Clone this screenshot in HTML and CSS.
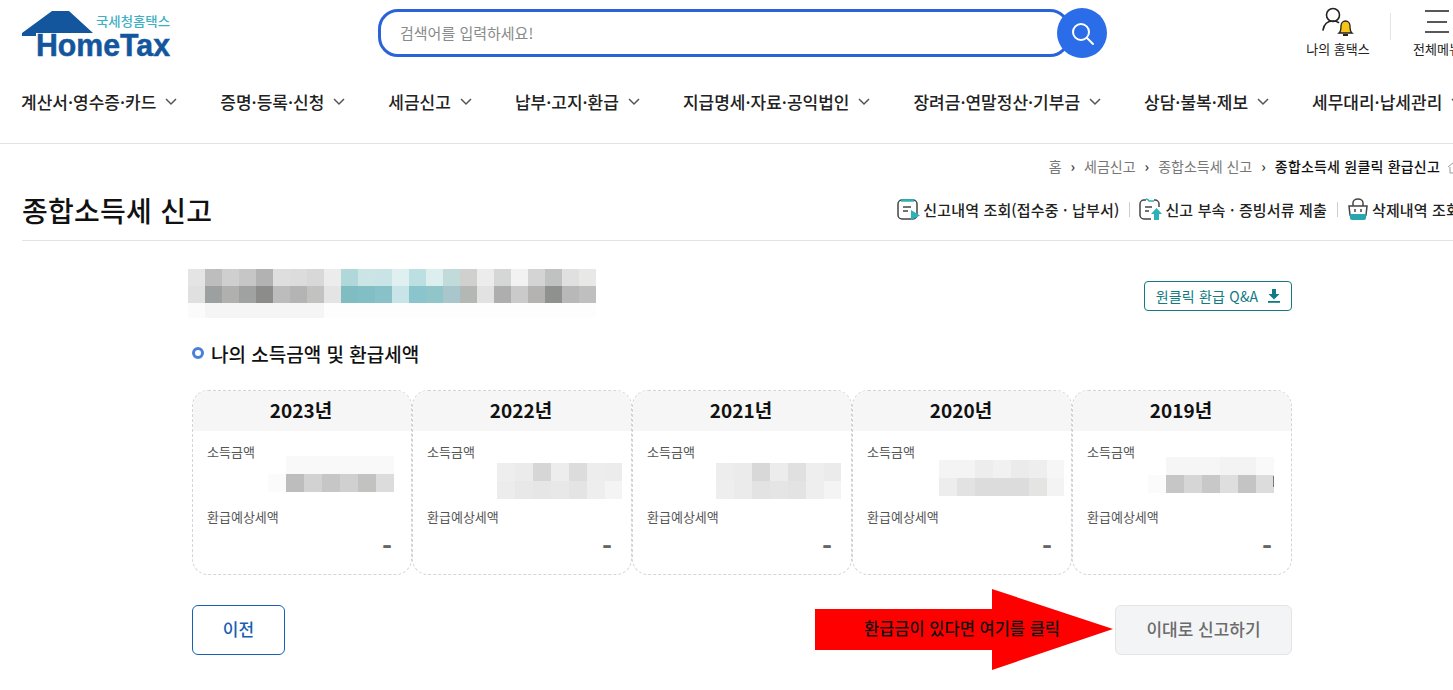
FILE: index.html
```html
<!DOCTYPE html>
<html lang="ko">
<head>
<meta charset="utf-8">
<title>종합소득세 신고</title>
<link rel="stylesheet" href="styles.css">
</head>
<body>
<div class="page">
  <header class="header">
    <div class="top">
      <svg class="logo" width="150" height="50" viewBox="0 0 150 50">
        <polygon class="logo-roof" points="0,26 30,4 47,4 71,26 68,26 40,26 14,26 14,29 0,29"/>
        <text class="logo-sub" x="74" y="19" textLength="74" lengthAdjust="spacingAndGlyphs">국세청홈택스</text>
        <text class="logo-main" x="14" y="49" textLength="134" lengthAdjust="spacingAndGlyphs">HomeTax</text>
      </svg>
      <div class="search">
        <div class="search-box">검색어를 입력하세요!</div>
        <div class="search-btn">
          <svg width="26" height="26" viewBox="0 0 26 26"><circle cx="12" cy="12" r="8" fill="none" stroke="#fff" stroke-width="2"/><path d="M18 18l6 6" stroke="#fff" stroke-width="2" stroke-linecap="round"/></svg>
        </div>
      </div>
      <div class="util">
        <svg class="util-icon" width="36" height="30" viewBox="0 0 36 30">
          <circle cx="13" cy="8" r="6.5" fill="none" stroke="#222" stroke-width="1.6"/>
          <path d="M3 23c1-6 5-9 10-9 2 0 4 .5 5.5 1.5" fill="none" stroke="#222" stroke-width="1.6" stroke-linecap="round"/>
          <path d="M19 26c2-1.500 2-4 2-7 0-3 2-5 4.500-5s4.500 2 4.500 5c0 3 0 5.500 2 7z" fill="#f5c518" stroke="#222" stroke-width="1.300"/>
          <rect x="23" y="27" width="5" height="2" fill="#222"/>
        </svg>
        <span class="util-label">나의 홈택스</span>
      </div>
      <div class="util-sep"></div>
      <div class="util util-menu">
        <svg class="util-icon" width="26" height="30" viewBox="0 0 26 30">
          <path d="M1 4h24M3 15h20M1 25h24" stroke="#222" stroke-width="1.500"/>
        </svg>
        <span class="util-label">전체메뉴</span>
      </div>
    </div>
    <nav class="nav">
      <a class="nav-item">계산서·영수증·카드<svg class="chev" width="12" height="8" viewBox="0 0 12 8"><path d="M1 1l5 5 5-5"/></svg></a>
      <a class="nav-item">증명·등록·신청<svg class="chev" width="12" height="8" viewBox="0 0 12 8"><path d="M1 1l5 5 5-5"/></svg></a>
      <a class="nav-item">세금신고<svg class="chev" width="12" height="8" viewBox="0 0 12 8"><path d="M1 1l5 5 5-5"/></svg></a>
      <a class="nav-item">납부·고지·환급<svg class="chev" width="12" height="8" viewBox="0 0 12 8"><path d="M1 1l5 5 5-5"/></svg></a>
      <a class="nav-item">지급명세·자료·공익법인<svg class="chev" width="12" height="8" viewBox="0 0 12 8"><path d="M1 1l5 5 5-5"/></svg></a>
      <a class="nav-item">장려금·연말정산·기부금<svg class="chev" width="12" height="8" viewBox="0 0 12 8"><path d="M1 1l5 5 5-5"/></svg></a>
      <a class="nav-item">상담·불복·제보<svg class="chev" width="12" height="8" viewBox="0 0 12 8"><path d="M1 1l5 5 5-5"/></svg></a>
      <a class="nav-item">세무대리·납세관리<svg class="chev" width="12" height="8" viewBox="0 0 12 8"><path d="M1 1l5 5 5-5"/></svg></a>
    </nav>
  </header>

  <div class="crumbs">
    <span>홈</span><i>›</i><span>세금신고</span><i>›</i><span>종합소득세 신고</span><i>›</i><b>종합소득세 원클릭 환급신고</b>
    <svg class="crumb-icon" width="14" height="14" viewBox="0 0 14 14"><path d="M1 7l6-5 6 5M3 7v6h8V7" fill="none" stroke="#999" stroke-width="1"/></svg>
  </div>

  <div class="title-row">
    <h1 class="title">종합소득세 신고</h1>
    <div class="links">
      <a class="link">
        <svg width="23" height="23" viewBox="0 0 23 23"><rect x="1" y="2" width="19" height="19" rx="4" fill="none" stroke="#444" stroke-width="1.500"/><path d="M4 2.500h13" stroke="#2bb3b8" stroke-width="2.500"/><path d="M6 9h8M6 13h5" stroke="#444" stroke-width="1.500"/><polygon points="14,12 23,17.500 14,22" fill="#2bb3b8"/></svg>
        신고내역 조회(접수중 · 납부서)
      </a>
      <span class="link-sep"></span>
      <a class="link">
        <svg width="23" height="23" viewBox="0 0 23 23"><path d="M7 2H5a4 4 0 0 0-4 4v11a4 4 0 0 0 4 4h7M15 2h1a4 4 0 0 1 4 4v3" fill="none" stroke="#444" stroke-width="1.500"/><path d="M7 1a3 3 0 0 1 3 2h5" fill="none" stroke="#2bb3b8" stroke-width="1.500"/><path d="M6 9h7M6 13h4" stroke="#444" stroke-width="1.500"/><polygon points="17.500,10 23,16 20,16 20,22 15,22 15,16 12,16" fill="#2bb3b8"/></svg>
        신고 부속 · 증빙서류 제출
      </a>
      <span class="link-sep"></span>
      <a class="link">
        <svg width="22" height="23" viewBox="0 0 22 23"><path d="M6 8V5a5 4 0 0 1 10 0v3" fill="none" stroke="#444" stroke-width="1.500"/><path d="M2 8h18l-1 9H3z" fill="#fff" stroke="#444" stroke-width="1.500"/><path d="M2.500 16h17l-.5 4a2 2 0 0 1-2 2H5a2 2 0 0 1-2-2z" fill="#2aa5ad"/><path d="M8 11v3M14 11v3" stroke="#444" stroke-width="1.500"/></svg>
        삭제내역 조회
      </a>
    </div>
  </div>

  <main class="main">
    <div class="intro">
      <svg class="mosaic" width="410" height="49" viewBox="0 0 410 49" shape-rendering="crispEdges">
        <g>
          <rect x="0" width="17" height="17" fill="#e4e4e4"/><rect x="17" width="17" height="17" fill="#bdbdbd"/><rect x="34" width="17" height="17" fill="#cfcfcf"/><rect x="51" width="17" height="17" fill="#c6c6c6"/><rect x="68" width="17" height="17" fill="#b2b2b2"/><rect x="85" width="17" height="17" fill="#dedede"/><rect x="102" width="17" height="17" fill="#dcdcdc"/><rect x="119" width="17" height="17" fill="#d8d8d8"/><rect x="136" width="17" height="17" fill="#ececec"/><rect x="153" width="17" height="17" fill="#b0d8da"/><rect x="170" width="17" height="17" fill="#cbe5e6"/><rect x="187" width="17" height="17" fill="#c8e4e6"/><rect x="204" width="17" height="17" fill="#e0f0f0"/><rect x="221" width="17" height="17" fill="#bcdfe2"/><rect x="238" width="17" height="17" fill="#ddeeee"/><rect x="255" width="17" height="17" fill="#c0dbd9"/><rect x="272" width="17" height="17" fill="#d0d0ce"/><rect x="289" width="17" height="17" fill="#ececec"/><rect x="306" width="17" height="17" fill="#d5d6d6"/><rect x="323" width="17" height="17" fill="#f2f2f2"/><rect x="340" width="17" height="17" fill="#d4d4d4"/><rect x="357" width="17" height="17" fill="#c0c2c2"/><rect x="374" width="17" height="17" fill="#e0e0e0"/><rect x="391" width="17" height="17" fill="#e8e8e6"/>
        </g>
        <g transform="translate(0 17)">
          <rect x="0" width="17" height="17" fill="#e0e0e0"/><rect x="17" width="17" height="17" fill="#9da0a0"/><rect x="34" width="17" height="17" fill="#b0b0ae"/><rect x="51" width="17" height="17" fill="#a0a2a2"/><rect x="68" width="17" height="17" fill="#8c8c8a"/><rect x="85" width="17" height="17" fill="#bcbcbc"/><rect x="102" width="17" height="17" fill="#b4b4b4"/><rect x="119" width="17" height="17" fill="#c2c2c0"/><rect x="136" width="17" height="17" fill="#e4e4e4"/><rect x="153" width="17" height="17" fill="#7fbdc2"/><rect x="170" width="17" height="17" fill="#82bfc4"/><rect x="187" width="17" height="17" fill="#88c2c8"/><rect x="204" width="17" height="17" fill="#c9e4e8"/><rect x="221" width="17" height="17" fill="#8ac4cc"/><rect x="238" width="17" height="17" fill="#90c6ca"/><rect x="255" width="17" height="17" fill="#a8c6cc"/><rect x="272" width="17" height="17" fill="#b4b8b4"/><rect x="289" width="17" height="17" fill="#e2e2e2"/><rect x="306" width="17" height="17" fill="#aeaeae"/><rect x="323" width="17" height="17" fill="#cacaca"/><rect x="340" width="17" height="17" fill="#b4b3b1"/><rect x="357" width="17" height="17" fill="#8f918e"/><rect x="374" width="17" height="17" fill="#b8b8b8"/><rect x="391" width="17" height="17" fill="#bfbfbf"/>
        </g>
        <g transform="translate(0 34)">
          <rect x="0" width="17" height="15" fill="#fbfbfb"/><rect x="17" width="119" height="15" fill="#f5f5f5"/><rect x="136" width="272" height="15" fill="#fdfdfd"/>
        </g>
      </svg>
      <a class="qa">원클릭 환급 Q&amp;A
        <svg width="12" height="14" viewBox="0 0 12 14"><path d="M4 0h4v5h3.500L6 10.500.500 5H4z" fill="#127a82"/><rect x="0" y="12" width="12" height="1.800" fill="#127a82"/></svg>
      </a>
    </div>

    <h2 class="sec-title"><span class="ring"></span>나의 소득금액 및 환급세액</h2>

    <div class="cards">
      <section class="card">
        <div class="card-head">2023년</div>
        <div class="card-body">
          <div class="label">소득금액</div>
          <svg class="amount" width="218" height="48" viewBox="0 0 218 48" shape-rendering="crispEdges">
            <rect x="93" y="1" width="108" height="18" fill="#f9f9f9"/><rect x="75" y="19" width="18" height="18" fill="#fbfbfb"/>
            <rect x="93" y="19" width="18" height="18" fill="#bdbdbd"/><rect x="111" y="19" width="18" height="18" fill="#d2d2d2"/><rect x="129" y="19" width="18" height="18" fill="#c6c6c6"/><rect x="147" y="19" width="18" height="18" fill="#d0d0d0"/><rect x="165" y="19" width="18" height="18" fill="#c2c2c0"/><rect x="183" y="19" width="18" height="18" fill="#dcdcdc"/>
          </svg>
          <div class="label label-refund">환급예상세액</div>
          <div class="dash">-</div>
        </div>
      </section>
      <section class="card">
        <div class="card-head">2022년</div>
        <div class="card-body">
          <div class="label">소득금액</div>
          <svg class="amount" width="218" height="48" viewBox="0 0 218 48" shape-rendering="crispEdges">
            <rect x="84" y="8" width="18" height="18" fill="#eeeeee"/><rect x="102" y="8" width="18" height="18" fill="#ebebeb"/><rect x="120" y="8" width="18" height="18" fill="#d6d6d6"/><rect x="138" y="8" width="18" height="18" fill="#ededed"/><rect x="156" y="8" width="18" height="18" fill="#dcdcdc"/><rect x="174" y="8" width="18" height="18" fill="#ededed"/><rect x="192" y="8" width="17" height="18" fill="#ececec"/>
            <rect x="84" y="26" width="18" height="18" fill="#ececec"/><rect x="102" y="26" width="18" height="18" fill="#e8e8e8"/><rect x="120" y="26" width="18" height="18" fill="#e6e6e6"/><rect x="138" y="26" width="18" height="18" fill="#e8e8e8"/><rect x="156" y="26" width="18" height="18" fill="#e4e4e4"/><rect x="174" y="26" width="18" height="18" fill="#eeeeee"/><rect x="192" y="26" width="17" height="18" fill="#f4f4f4"/>
          </svg>
          <div class="label label-refund">환급예상세액</div>
          <div class="dash">-</div>
        </div>
      </section>
      <section class="card">
        <div class="card-head">2021년</div>
        <div class="card-body">
          <div class="label">소득금액</div>
          <svg class="amount" width="218" height="48" viewBox="0 0 218 48" shape-rendering="crispEdges">
            <rect x="83" y="8" width="18" height="18" fill="#ededed"/><rect x="101" y="8" width="18" height="18" fill="#ebebeb"/><rect x="119" y="8" width="18" height="18" fill="#d8d8d8"/><rect x="137" y="8" width="18" height="18" fill="#ececec"/><rect x="155" y="8" width="18" height="18" fill="#e0e0e0"/><rect x="173" y="8" width="18" height="18" fill="#eeeeee"/><rect x="191" y="8" width="17" height="18" fill="#ebebeb"/>
            <rect x="83" y="26" width="18" height="18" fill="#eeeeee"/><rect x="101" y="26" width="18" height="18" fill="#ebebeb"/><rect x="119" y="26" width="18" height="18" fill="#e3e3e3"/><rect x="137" y="26" width="18" height="18" fill="#e5e5e5"/><rect x="155" y="26" width="18" height="18" fill="#e3e3e3"/><rect x="173" y="26" width="18" height="18" fill="#eeeeee"/><rect x="191" y="26" width="17" height="18" fill="#f4f4f4"/>
          </svg>
          <div class="label label-refund">환급예상세액</div>
          <div class="dash">-</div>
        </div>
      </section>
      <section class="card">
        <div class="card-head">2020년</div>
        <div class="card-body">
          <div class="label">소득금액</div>
          <svg class="amount" width="218" height="48" viewBox="0 0 218 48" shape-rendering="crispEdges">
            <rect x="86" y="5" width="18" height="18" fill="#f4f4f4"/><rect x="104" y="5" width="18" height="18" fill="#f4f4f4"/><rect x="122" y="5" width="18" height="18" fill="#ededed"/><rect x="140" y="5" width="18" height="18" fill="#f1f1f1"/><rect x="158" y="5" width="18" height="18" fill="#ebebeb"/><rect x="176" y="5" width="18" height="18" fill="#eeeeee"/><rect x="194" y="5" width="17" height="18" fill="#f6f6f6"/>
            <rect x="86" y="23" width="18" height="18" fill="#ededed"/><rect x="104" y="23" width="18" height="18" fill="#e2e2e2"/><rect x="122" y="23" width="18" height="18" fill="#dcdcdc"/><rect x="140" y="23" width="18" height="18" fill="#dcdcdc"/><rect x="158" y="23" width="18" height="18" fill="#dcdcdc"/><rect x="176" y="23" width="18" height="18" fill="#e4e4e2"/><rect x="194" y="23" width="17" height="18" fill="#f3f3f3"/>
          </svg>
          <div class="label label-refund">환급예상세액</div>
          <div class="dash">-</div>
        </div>
      </section>
      <section class="card">
        <div class="card-head">2019년</div>
        <div class="card-body">
          <div class="label">소득금액</div>
          <svg class="amount" width="218" height="48" viewBox="0 0 218 48" shape-rendering="crispEdges">
            <rect x="93" y="2" width="54" height="18" fill="#f6f6f6"/><rect x="147" y="2" width="36" height="18" fill="#f3f3f3"/><rect x="183" y="2" width="18" height="18" fill="#f9f9f9"/><rect x="75" y="20" width="18" height="18" fill="#fbfbfb"/>
            <rect x="93" y="20" width="18" height="18" fill="#c6c6c6"/><rect x="111" y="20" width="18" height="18" fill="#d6d6d6"/><rect x="129" y="20" width="18" height="18" fill="#c8c8c8"/><rect x="147" y="20" width="18" height="18" fill="#dedede"/><rect x="165" y="20" width="18" height="18" fill="#c4c4c4"/><rect x="183" y="20" width="18" height="18" fill="#dcdcdc"/>
            <rect x="200" y="21" width="1" height="11" fill="#777"/>
          </svg>
          <div class="label label-refund">환급예상세액</div>
          <div class="dash">-</div>
        </div>
      </section>
    </div>

    <div class="actions">
      <button class="btn btn-prev">이전</button>
      <button class="btn btn-next">이대로 신고하기</button>
      <div class="callout">
        <svg width="300" height="82" viewBox="0 0 300 82"><polygon points="0,20 177,20 177,0 298,40 177,81 177,61 0,61" fill="#ff0000"/></svg>
        <span class="callout-text">환급금이 있다면 여기를 클릭</span>
      </div>
    </div>
  </main>
</div>
</body>
</html>
```
FILE: styles.css
```css
* { box-sizing: border-box; }
html, body { margin: 0; padding: 0; overflow: hidden; background: #fff; }
body { font-family: "Noto Sans CJK KR", "Noto Sans", sans-serif; color: #111; }
.page { width: 1484px; height: 690px; overflow: hidden; }

.header { height: 144px; border-bottom: 1px solid #e3e3e3; }
.top { display: flex; height: 70px; padding-left: 22px; align-items: flex-start; }
.logo { margin-top: 7px; flex: none; }
.logo-roof { fill: #14569e; }
.logo-sub { font-size: 13px; font-weight: 500; fill: #3eb0c6; font-family: "Noto Sans CJK KR", sans-serif; }
.logo-main { font-size: 31px; font-weight: 700; fill: #14569e; stroke: #14569e; stroke-width: 0.5px; font-family: "Liberation Sans", sans-serif; }

.search { position: relative; width: 729px; height: 50px; margin: 8px 0 0 206px; flex: none; }
.search-box { width: 692px; height: 48px; margin-top: 1px; border: 3px solid #2a62d9; border-radius: 20px; padding-left: 19px; font-size: 15px; line-height: 41px; color: #8a8a8a; }
.search-btn { position: absolute; right: 0; top: 0; width: 50px; height: 50px; border-radius: 50%; background: #2b6de8; display: flex; align-items: center; justify-content: center; }

.util { width: 80px; margin-left: 191px; display: flex; flex-direction: column; align-items: center; flex: none; padding-top: 7px; }
.util-icon { display: block; }
.util-label { font-size: 13px; line-height: 18px; margin-top: 3px; color: #222; white-space: nowrap; }
.util-sep { width: 1px; height: 27px; margin: 13px 0 0 12px; background: #e3e3e3; flex: none; }
.util-menu { margin-left: 16px; width: 60px; }

.nav { display: flex; padding-left: 21px; height: 60px; align-items: center; gap: 43px; margin-top: 1px; white-space: nowrap; }
.nav-item { display: flex; align-items: center; font-size: 17px; font-weight: 500; color: #222; flex: none; }
.chev { margin-left: 9px; margin-top: 1px; }
.chev path { fill: none; stroke: #555; stroke-width: 1.500; }

.crumbs { display: flex; justify-content: flex-end; align-items: center; height: 18px; margin-top: 13px; padding-right: 23px; font-size: 14px; color: #777; gap: 9px; }
.crumbs i { font-style: normal; color: #444; font-weight: 700; }
.crumbs b { color: #111; font-weight: 500; letter-spacing: 0.2px; }
.crumb-icon { flex: none; margin-top: 1px; margin-left: -2px; }

.title-row { display: flex; justify-content: space-between; align-items: center; height: 66px; margin: 0 0 0 22px; padding: 5px 24px 0 0; border-bottom: 1px solid #e3e3e3; }
.title { margin: 0; font-size: 28px; font-weight: 500; line-height: 40px; color: #111; letter-spacing: 0.25px; }
.links { display: flex; align-items: center; padding-bottom: 2px; }
.link { display: flex; align-items: center; gap: 3px; font-size: 15px; font-weight: 500; letter-spacing: 0.15px; color: #222; white-space: nowrap; }
.link-sep { width: 1px; height: 15px; background: #ccc; margin: 0 9px 0 10px; }

.main { width: 1100px; margin: 0 auto; }
.intro { display: flex; justify-content: space-between; align-items: flex-start; height: 90px; padding-top: 28px; }
.mosaic { margin-left: -4px; flex: none; }
.qa { display: flex; align-items: center; justify-content: center; gap: 10px; width: 148px; height: 30px; margin-top: 12px; padding-bottom: 1px; border: 1px solid #127a82; border-radius: 4px; font-size: 14px; letter-spacing: 0.2px; color: #127a82; }

.sec-title { display: flex; align-items: center; margin: 0; height: 59px; padding-bottom: 15px; font-size: 19px; font-weight: 500; color: #111; }
.ring { width: 12px; height: 12px; margin-right: 7px; border: 3px solid #4a80d8; border-radius: 50%; background: #fff; }

.cards { display: flex; }
.card { width: 220px; height: 185px; border: 1px dashed #d4d4d4; border-radius: 16px; overflow: hidden; flex: none; }
.card-head { height: 40px; padding-right: 2px; background: #f6f6f6; text-align: center; font-size: 19px; font-weight: 700; line-height: 38px; color: #111; }
.card-body { padding-top: 12px; }
.label { height: 20px; padding-left: 14px; font-size: 13px; line-height: 18px; color: #555; }
.amount { display: block; margin-top: -8px; }
.label-refund { margin-top: 5px; }
.dash { padding-right: 19px; margin-top: 3px; text-align: right; font-size: 27px; font-weight: 700; line-height: 30px; color: #666; }

.actions { position: relative; display: flex; justify-content: space-between; margin-top: 30px; }
.btn { height: 50px; padding-bottom: 4px; border-radius: 6px; font-family: inherit; font-size: 17px; background: #fff; }
.btn-prev { width: 93px; border: 1px solid #1a5fb4; color: #1a5fb4; font-weight: 500; }
.btn-next { width: 177px; border: 1px solid #e4e4e4; background: #f3f4f6; color: #6b6b6b; font-weight: 500; }
.callout { position: absolute; left: 623px; top: -16px; width: 300px; height: 82px; }
.callout svg { display: block; }
.callout-text { position: absolute; left: 49px; top: 27px; font-size: 16.5px; font-weight: 500; line-height: 24px; color: #111; white-space: nowrap; }
```
